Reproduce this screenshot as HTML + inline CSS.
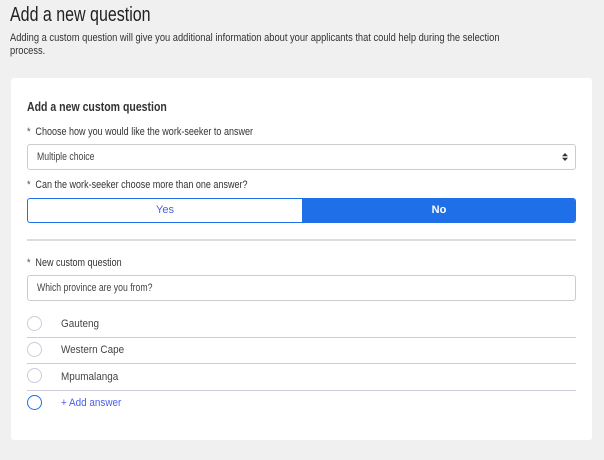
<!DOCTYPE html>
<html><head><meta charset="utf-8"><style>
*{box-sizing:border-box;margin:0;padding:0}
body{width:604px;height:460px;background:#f0f0f0;font-family:"Liberation Sans",sans-serif;color:#333;position:relative;overflow:hidden}
.a{position:absolute;white-space:nowrap;transform:scaleX(0.82);transform-origin:0 0}
.card{position:absolute;left:11px;top:78px;width:581px;height:362px;background:#fff;border-radius:3px}
.lbl{font-size:11px;color:#333}
.lbl b{font-weight:normal;color:#555;margin-right:6px}
.box{position:absolute;left:27px;width:549px;border:1px solid #ccc;border-radius:3px;font-size:11px;color:#444;padding-left:9px}
.box span.t{display:inline-block;transform:scaleX(0.79);transform-origin:0 0}
.c{position:absolute;left:27px;width:15px;height:15px;border:1px solid #ccd;border-radius:50%}
.sep{position:absolute;left:27px;width:549px;height:1px;background:#ccd}
.opt{position:absolute;left:61px;font-size:11px;color:#444;white-space:nowrap;transform:scaleX(0.9);transform-origin:0 0}
</style></head><body>
<div class="a" style="left:10px;top:4px;font-size:20px;color:#222;transform:scaleX(0.8)">Add a new question</div>
<div class="a" style="left:10px;top:32px;font-size:11px;line-height:13px;color:#333;transform:scaleX(0.848)">Adding a custom question will give you additional information about your applicants that could help during the selection<br>process.</div>
<div class="card"></div>
<div class="a" style="left:27px;top:99px;font-size:13px;font-weight:bold;color:#333;transform:scaleX(0.81)">Add a new custom question</div>
<div class="a lbl" style="left:27px;top:126px"><b>*</b>Choose how you would like the work-seeker to answer</div>
<div class="box" style="top:144px;height:26px;line-height:24px"><span class="t">Multiple choice</span>
<svg style="position:absolute;right:7px;top:8px" width="6" height="8" viewBox="0 0 6 8"><path d="M0 3.2L3 0 6 3.2ZM0 4.8L3 8 6 4.8Z" fill="#333"/></svg></div>
<div class="a lbl" style="left:27px;top:179px"><b>*</b>Can the work-seeker choose more than one answer?</div>
<div style="position:absolute;left:27px;top:198px;width:549px;height:25px;border:1px solid #1e6fe8;border-radius:3px;overflow:hidden;font-size:11px">
<div style="position:absolute;left:0;top:0;width:274px;height:23px;line-height:23px;text-align:center;color:#4a5ee8">Yes</div>
<div style="position:absolute;left:274px;top:0;width:274px;height:23px;line-height:23px;text-align:center;background:#1e6fe8;color:#fff;font-weight:bold">No</div>
</div>
<div style="position:absolute;left:27px;top:239px;width:549px;height:2px;background:#ddd"></div>
<div class="a lbl" style="left:27px;top:257px"><b>*</b>New custom question</div>
<div class="box" style="top:275px;height:26px;line-height:24px"><span class="t">Which province are you from?</span></div>
<div class="c" style="top:316px"></div><div class="opt" style="top:318px">Gauteng</div>
<div class="sep" style="top:337px"></div>
<div class="c" style="top:342px"></div><div class="opt" style="top:344px">Western Cape</div>
<div class="sep" style="top:363px"></div>
<div class="c" style="top:368px"></div><div class="opt" style="top:371px">Mpumalanga</div>
<div class="sep" style="top:390px"></div>
<div class="c" style="top:395px;border-color:#1e6fe8"></div><div class="opt" style="top:397px;color:#4a5ee8">+ Add answer</div>
</body></html>
